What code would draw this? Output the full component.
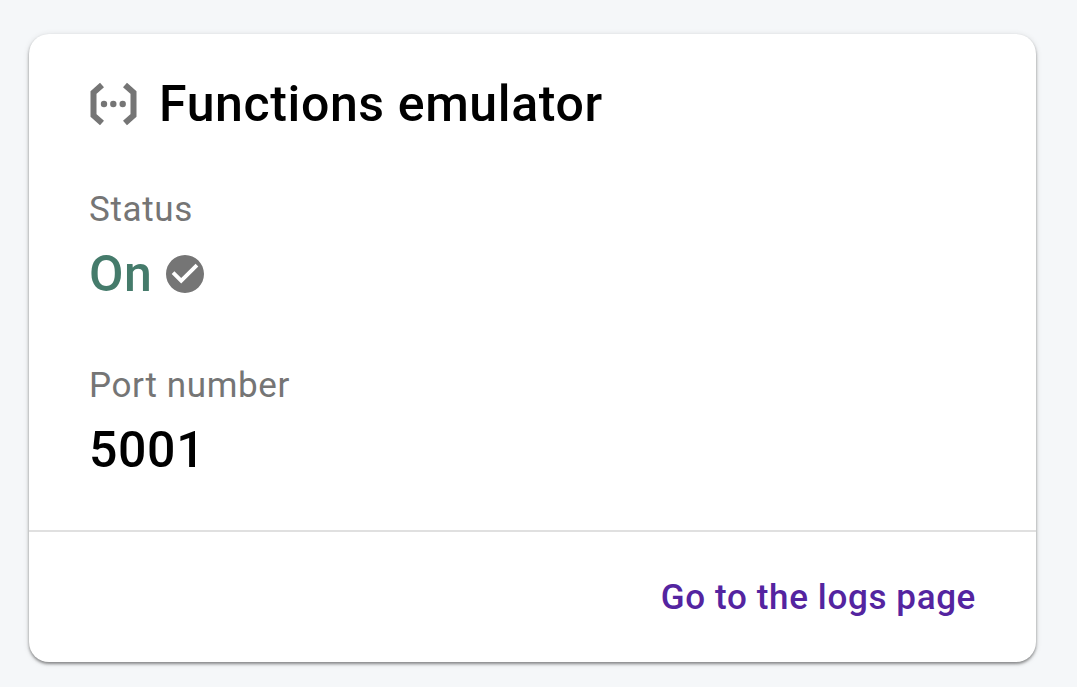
<main>
  <section class="card" aria-labelledby="title">
    <div class="content">
      <header>
        <svg class="functions" viewBox="0 0 48 44" aria-hidden="true">
          <path d="M12.500 3 L4 10.500 V33.500 L12.500 41 M35.500 3 L44 10.500 V33.500 L35.500 41" transform="translate(0.500 0)" fill="none" stroke="#757575" stroke-width="6" />
          <circle cx="15" cy="22" r="3.200" fill="#757575" />
          <circle cx="24.300" cy="22" r="3.200" fill="#757575" />
          <circle cx="33.700" cy="22" r="3.200" fill="#757575" />
        </svg>
        <h1 id="title">Functions emulator</h1>
      </header>
      <dl>
        <div class="field">
          <dt>Status</dt>
          <dd class="on">
            On
            <svg class="check" viewBox="2 2 20 20" aria-hidden="true">
              <path fill="#757575" d="M12 2C6.48 2 2 6.48 2 12s4.48 10 10 10 10-4.48 10-10S17.52 2 12 2zm-2 15l-5-5 1.41-1.41L10 14.17l7.59-7.59L19 8l-9 9z" />
            </svg>
          </dd>
        </div>
        <div class="field">
          <dt>Port number</dt>
          <dd>5001</dd>
        </div>
      </dl>
    </div>
    <footer><a href="#logs">Go to the logs page</a></footer>
  </section>
</main>

<style>
  :global(body) {
    margin: 0;
    background: #f5f7f9;
  }
  main {
    padding: 34px 41px 24px 29px;
    font-family: Roboto, sans-serif;
    color: #000;
  }
  .card {
    background: #fff;
    border-radius: 20px;
    box-shadow: 0 2px 3px rgba(0, 0, 0, 0.4), 0 1px 6px rgba(0, 0, 0, 0.12);
  }
  .content {
    padding: 38px 60px 44px;
  }
  header {
    display: flex;
    align-items: center;
    gap: 22px;
  }
  .functions {
    flex: none;
    width: 48px;
    height: 44px;
  }
  h1 {
    margin: 0;
    font-size: 50px;
    line-height: 64px;
    font-weight: 500;
    letter-spacing: 0.0125em;
  }
  dl {
    display: flex;
    flex-direction: column;
    gap: 52px;
    margin: 50px 0 0;
  }
  dt {
    font-size: 35px;
    line-height: 48px;
    letter-spacing: 0.018em;
    color: #757575;
  }
  dd {
    display: flex;
    align-items: center;
    gap: 13px;
    margin: 4px 0 0;
    font-size: 50px;
    line-height: 72px;
    font-weight: 500;
    letter-spacing: 0.0125em;
  }
  .on {
    color: #457b6b;
  }
  .check {
    width: 38px;
    height: 38px;
  }
  footer {
    display: flex;
    justify-content: flex-end;
    padding: 42px 60px 40px;
    border-top: 2px solid #e0e0e0;
  }
  a {
    font-size: 35px;
    line-height: 48px;
    font-weight: 500;
    letter-spacing: 0.018em;
    color: #5424a0;
    text-decoration: none;
  }
</style>
